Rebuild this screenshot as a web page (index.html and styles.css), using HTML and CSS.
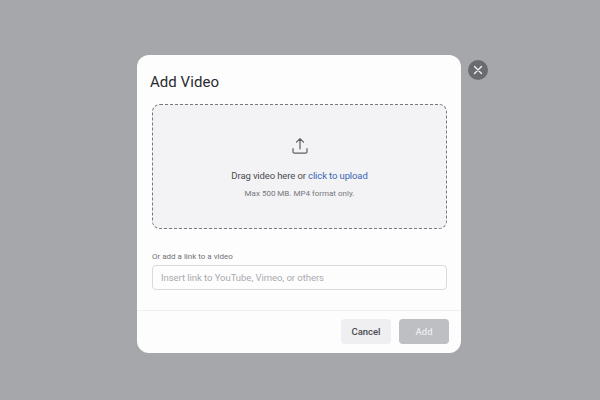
FILE: index.html
```html
<!DOCTYPE html>
<html lang="en">
<head>
<meta charset="utf-8">
<title>Add Video</title>
<link rel="stylesheet" href="styles.css">
</head>
<body>
<div class="backdrop">
  <div class="modal">
    <button class="close" aria-label="Close">
      <svg width="10" height="10" viewBox="0 0 10 10"><path d="M1.5 1.5l7 7M8.5 1.5l-7 7" stroke="#f4f4f5" stroke-width="1.4" stroke-linecap="round" fill="none"/></svg>
    </button>
    <div class="body">
      <h1 class="title">Add Video</h1>
      <div class="drop">
        <svg class="upload" width="18" height="18" viewBox="0 0 18 18" fill="none" stroke="#5c5f66" stroke-width="1.2" stroke-linecap="round" stroke-linejoin="round"><path d="M9 12V2M5.5 5.2L9 1.6l3.5 3.6M2 11.5v3.2c0 .9.6 1.5 1.5 1.5h11c.9 0 1.5-.6 1.5-1.5v-3.2"/></svg>
        <p class="drag">Drag video here or <a class="link">click to upload</a></p>
        <p class="hint">Max 500 MB. MP4 format only.</p>
      </div>
      <label class="label">Or add a link to a video</label>
      <div class="input">Insert link to YouTube, Vimeo, or others</div>
    </div>
    <div class="footer">
      <button class="btn cancel">Cancel</button>
      <button class="btn add">Add</button>
    </div>
  </div>
</div>
</body>
</html>
```
FILE: styles.css
```css
* { box-sizing: border-box; }
html, body { margin: 0; height: 100%; }
body { font-family: Roboto, "Liberation Sans", sans-serif; background: #a6a7aa; overflow: hidden; }
.backdrop { width: 600px; height: 400px; padding-top: 55px; padding-left: 137px; }
.modal { position: relative; width: 324px; height: 298px; background: #fefdfe; border-radius: 12px; display: flex; flex-direction: column; }
.close { position: absolute; left: 331px; top: 5px; width: 20px; height: 20px; border-radius: 50%; border: 0; padding: 0; background: #6a6b6e; display: flex; align-items: center; justify-content: center; }
.body { padding: 18px 13px 0; flex: 1; display: flex; flex-direction: column; }
.title { margin: 0; font-size: 15px; font-weight: 400; letter-spacing: 0.05px; line-height: 19px; color: #2a2b2f; }
.drop { margin-top: 12px; margin-left: 2px; width: 295px; height: 125px; background: #f3f2f4; border: 1px dashed #77787c; border-radius: 8px; display: flex; flex-direction: column; align-items: center; padding-top: 32px; }
.upload { display: block; }
.drag { margin: 14px 0 0; font-size: 9.5px; letter-spacing: -0.12px; line-height: 13px; color: #4a4b50; }
.link { color: #3c66b4; }
.hint { margin: 6px 0 0; font-size: 8px; line-height: 11px; color: #77787c; }
.label { margin: 22px 0 0 2px; font-size: 8px; line-height: 11px; color: #6f7075; }
.input { margin: 3px 0 0 2px; width: 295px; height: 25px; border: 1px solid #d9d9dd; border-radius: 4px; padding: 0 8px; font-size: 9.5px; letter-spacing: -0.05px; line-height: 23px; color: #a9aaae; background: #fefdfe; }
.footer { height: 43px; border-top: 1px solid #f0eff1; display: flex; justify-content: flex-end; gap: 8px; padding: 8px 12px 0 0; }
.btn { width: 50px; height: 25px; border: 0; border-radius: 4px; font-family: inherit; font-size: 9.5px; font-weight: 500; padding: 0; }
.cancel { background: #efeef0; color: #4a4b50; }
.add { background: #bdbfc3; color: #eceded; }
```
